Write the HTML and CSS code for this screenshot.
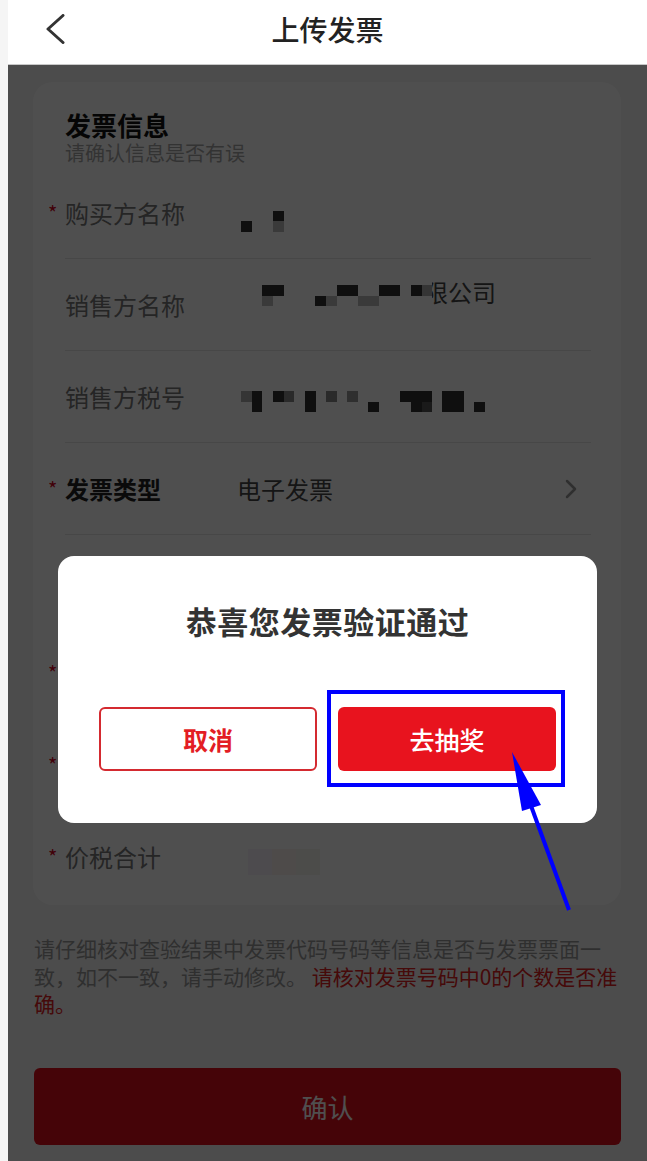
FILE: index.html
```html
<!DOCTYPE html>
<html lang="zh-CN">
<head>
<meta charset="utf-8">
<title>上传发票</title>
<link rel="stylesheet" href="styles.css">
</head>
<body>
<div class="app">
  <header class="header">
    <div class="back">
      <svg width="20" height="30" viewBox="0 0 20 30"><path d="M18 1.5 L3 15 L18 28.5" fill="none" stroke="#333" stroke-width="3" stroke-linecap="round" stroke-linejoin="round"/></svg>
    </div>
    <div class="header-title">上传发票</div>
    <div></div>
  </header>

  <main class="main">
    <section class="card">
      <div class="card-head">
        <div class="card-title">发票信息</div>
        <div class="card-sub">请确认信息是否有误</div>
      </div>

      <div class="row">
        <div class="label req">购买方名称</div>
        <div class="value">
          <svg class="mosaic" width="60" height="91" viewBox="0 0 60 91">
            <rect x="4" y="54" width="11" height="11" fill="#333"/>
            <rect x="36" y="44" width="11" height="10" fill="#333"/>
            <rect x="36" y="54" width="11" height="11" fill="#bbb"/>
          </svg>
        </div>
      </div>

      <div class="row">
        <div class="label">销售方名称</div>
        <div class="value">
          <svg class="mosaic over" width="187" height="91" viewBox="0 0 187 91">
            <rect x="25" y="26" width="22" height="11" fill="#333"/>
            <rect x="25" y="37" width="11" height="10" fill="#bbb"/>
            <rect x="78" y="37" width="11" height="10" fill="#333"/>
            <rect x="89" y="37" width="11" height="10" fill="#bbb"/>
            <rect x="100" y="26" width="21" height="11" fill="#333"/>
            <rect x="121" y="37" width="21" height="10" fill="#bbb"/>
            <rect x="142" y="26" width="21" height="11" fill="#333"/>
            <rect x="174" y="26" width="11" height="11" fill="#333"/>
            <rect x="185" y="20" width="10" height="30" fill="#fff"/>
            <rect x="185" y="26" width="10" height="11" fill="#aaa"/>
          </svg>
          <span class="value-up">限公司</span>
        </div>
      </div>

      <div class="row">
        <div class="label">销售方税号</div>
        <div class="value">
          <svg class="mosaic" width="250" height="91" viewBox="0 0 250 91">
            <rect x="4" y="40" width="11" height="11" fill="#aaa"/>
            <rect x="15" y="40" width="10" height="21" fill="#333"/>
            <rect x="36" y="40" width="11" height="11" fill="#333"/>
            <rect x="47" y="40" width="10" height="11" fill="#888"/>
            <rect x="68" y="40" width="11" height="21" fill="#333"/>
            <rect x="89" y="40" width="11" height="11" fill="#888"/>
            <rect x="110" y="40" width="11" height="11" fill="#999"/>
            <rect x="131" y="51" width="11" height="10" fill="#333"/>
            <rect x="163" y="40" width="32" height="11" fill="#333"/>
            <rect x="174" y="51" width="11" height="10" fill="#333"/>
            <rect x="185" y="51" width="10" height="10" fill="#555"/>
            <rect x="205" y="40" width="22" height="21" fill="#333"/>
            <rect x="237" y="51" width="11" height="10" fill="#333"/>
          </svg>
        </div>
      </div>

      <div class="row">
        <div class="label req strong">发票类型</div>
        <div class="value">
          <span class="value-text">电子发票</span>
          <svg class="chev" width="12" height="20" viewBox="0 0 12 20"><path d="M2 2 L10 10 L2 18" fill="none" stroke="#999" stroke-width="2.5" stroke-linecap="round" stroke-linejoin="round"/></svg>
        </div>
      </div>

      <div class="row">
        <div class="label">发票代码</div>
        <div class="value"></div>
      </div>

      <div class="row">
        <div class="label req">发票号码</div>
        <div class="value"></div>
      </div>

      <div class="row">
        <div class="label req">开票日期</div>
        <div class="value"></div>
      </div>

      <div class="row">
        <div class="label req">价税合计</div>
        <div class="value">
          <svg class="mosaic" width="90" height="91" viewBox="0 0 90 91">
            <rect x="11" y="38" width="24" height="26" fill="#f7f1fa"/>
            <rect x="35" y="38" width="24" height="26" fill="#faf3ee"/>
            <rect x="59" y="38" width="24" height="26" fill="#f4f6ef"/>
          </svg>
        </div>
      </div>
    </section>

    <p class="note">请仔细核对查验结果中发票代码号码等信息是否与发票票面一致，如不一致，请手动修改。 <span class="note-red">请核对发票号码中0的个数是否准确。</span></p>

    <div class="confirm">确认</div>
  </main>

  <div class="mask">
    <div class="modal">
      <div class="modal-title">恭喜您发票验证通过</div>
      <div class="modal-btns">
        <div class="btn btn-cancel">取消</div>
        <div class="btn btn-go">去抽奖</div>
      </div>
    </div>
  </div>
</div>

<svg class="annot" width="647" height="1161" viewBox="0 0 647 1161">
  <rect x="329" y="692" width="234" height="93" fill="none" stroke="#0000ff" stroke-width="4"/>
  <polygon points="512,752 522,811 541,805" fill="#0000ff"/>
  <line x1="530" y1="803" x2="569" y2="910" stroke="#0000ff" stroke-width="4"/>
</svg>
</body>
</html>
```
FILE: styles.css
```css
* {
  box-sizing: border-box;
  margin: 0;
  padding: 0;
}

body {
  position: relative;
  width: 647px;
  height: 1161px;
  overflow: hidden;
  background: #f5f5f5;
  font-family: "Noto Sans CJK SC", "Noto Sans", sans-serif;
}

.app {
  position: relative;
  margin-left: 8px;
  width: 639px;
  min-height: 1161px;
  background: #f5f5f5;
}

.header {
  height: 65px;
  background: #fff;
  border-bottom: 1px solid #c8c8c8;
  display: grid;
  grid-template-columns: 1fr auto 1fr;
  align-items: center;
  padding-bottom: 6px;
}

.back {
  padding-left: 37px;
  display: flex;
  align-items: center;
}

.back svg {
  display: block;
}

.header-title {
  font-size: 28px;
  line-height: 36px;
  font-weight: 500;
  color: #222;
}

.main {
  padding: 17px 26px 16px 25px;
}

.card {
  background: #fff;
  border-radius: 20px;
  padding: 28px 30px 3px 32px;
}

.card-head {
  padding-bottom: 1px;
}

.card-title {
  font-size: 26px;
  line-height: 29px;
  font-weight: 700;
  color: #111;
}

.card-sub {
  margin-top: 1px;
  font-size: 20px;
  line-height: 26px;
  color: #a6a6a6;
}

.row {
  height: 92px;
  border-bottom: 1px solid #e6e6e6;
  display: flex;
  align-items: center;
}

.row:last-child {
  height: 91px;
  border-bottom: none;
}

.label {
  width: 172px;
  flex: none;
  font-size: 24px;
  line-height: 32px;
  color: #777;
  white-space: nowrap;
}

.label.strong {
  font-weight: 700;
  color: #222;
}

.req::before {
  content: "*";
  display: inline-block;
  width: 17px;
  margin-left: -17px;
  color: #d0021b;
  font-size: 20px;
  font-weight: 400;
  vertical-align: 2px;
}

.value {
  flex: 1;
  align-self: stretch;
  display: flex;
  align-items: center;
  font-size: 24px;
  line-height: 32px;
  color: #444;
}

.mosaic {
  display: block;
  flex: none;
  overflow: visible;
}

.mosaic.over {
  position: relative;
}

.value-up {
  margin-bottom: 25px;
  white-space: nowrap;
}

.value-text {
  flex: 1;
}

.chev {
  display: block;
  margin-right: 14px;
}

.note {
  margin-top: 30px;
  padding-left: 1px;
  font-size: 21px;
  line-height: 27.5px;
  color: #999;
}

.note-red {
  color: #e02020;
}

.confirm {
  margin-top: 50px;
  margin-left: 1px;
  height: 77px;
  border-radius: 6px;
  background: #df0d1a;
  color: #fff;
  font-size: 26px;
  display: flex;
  align-items: center;
  justify-content: center;
}

.mask {
  position: absolute;
  top: 65px;
  left: 0;
  right: 0;
  bottom: 0;
  background: rgba(0, 0, 0, 0.69);
  display: flex;
  flex-direction: column;
  align-items: center;
}

.modal {
  margin-top: 491px;
  width: 539px;
  height: 267px;
  background: #fff;
  border-radius: 16px;
  padding: 45px 41px 0;
}

.modal-title {
  font-size: 31px;
  line-height: 40px;
  font-weight: 700;
  letter-spacing: 0.5px;
  text-align: center;
  color: #333;
}

.modal-btns {
  margin-top: 66px;
  display: grid;
  grid-template-columns: 1fr 1fr;
  gap: 21px;
}

.btn {
  height: 64px;
  border-radius: 6px;
  display: flex;
  align-items: center;
  justify-content: center;
  font-size: 25px;
}

.btn-cancel {
  border: 2px solid #d42a30;
  color: #e31d24;
  font-weight: 700;
}

.btn-go {
  background: #e8131e;
  color: #fff;
  font-weight: 500;
}

.annot {
  position: absolute;
  top: 0;
  left: 0;
  pointer-events: none;
}
```
